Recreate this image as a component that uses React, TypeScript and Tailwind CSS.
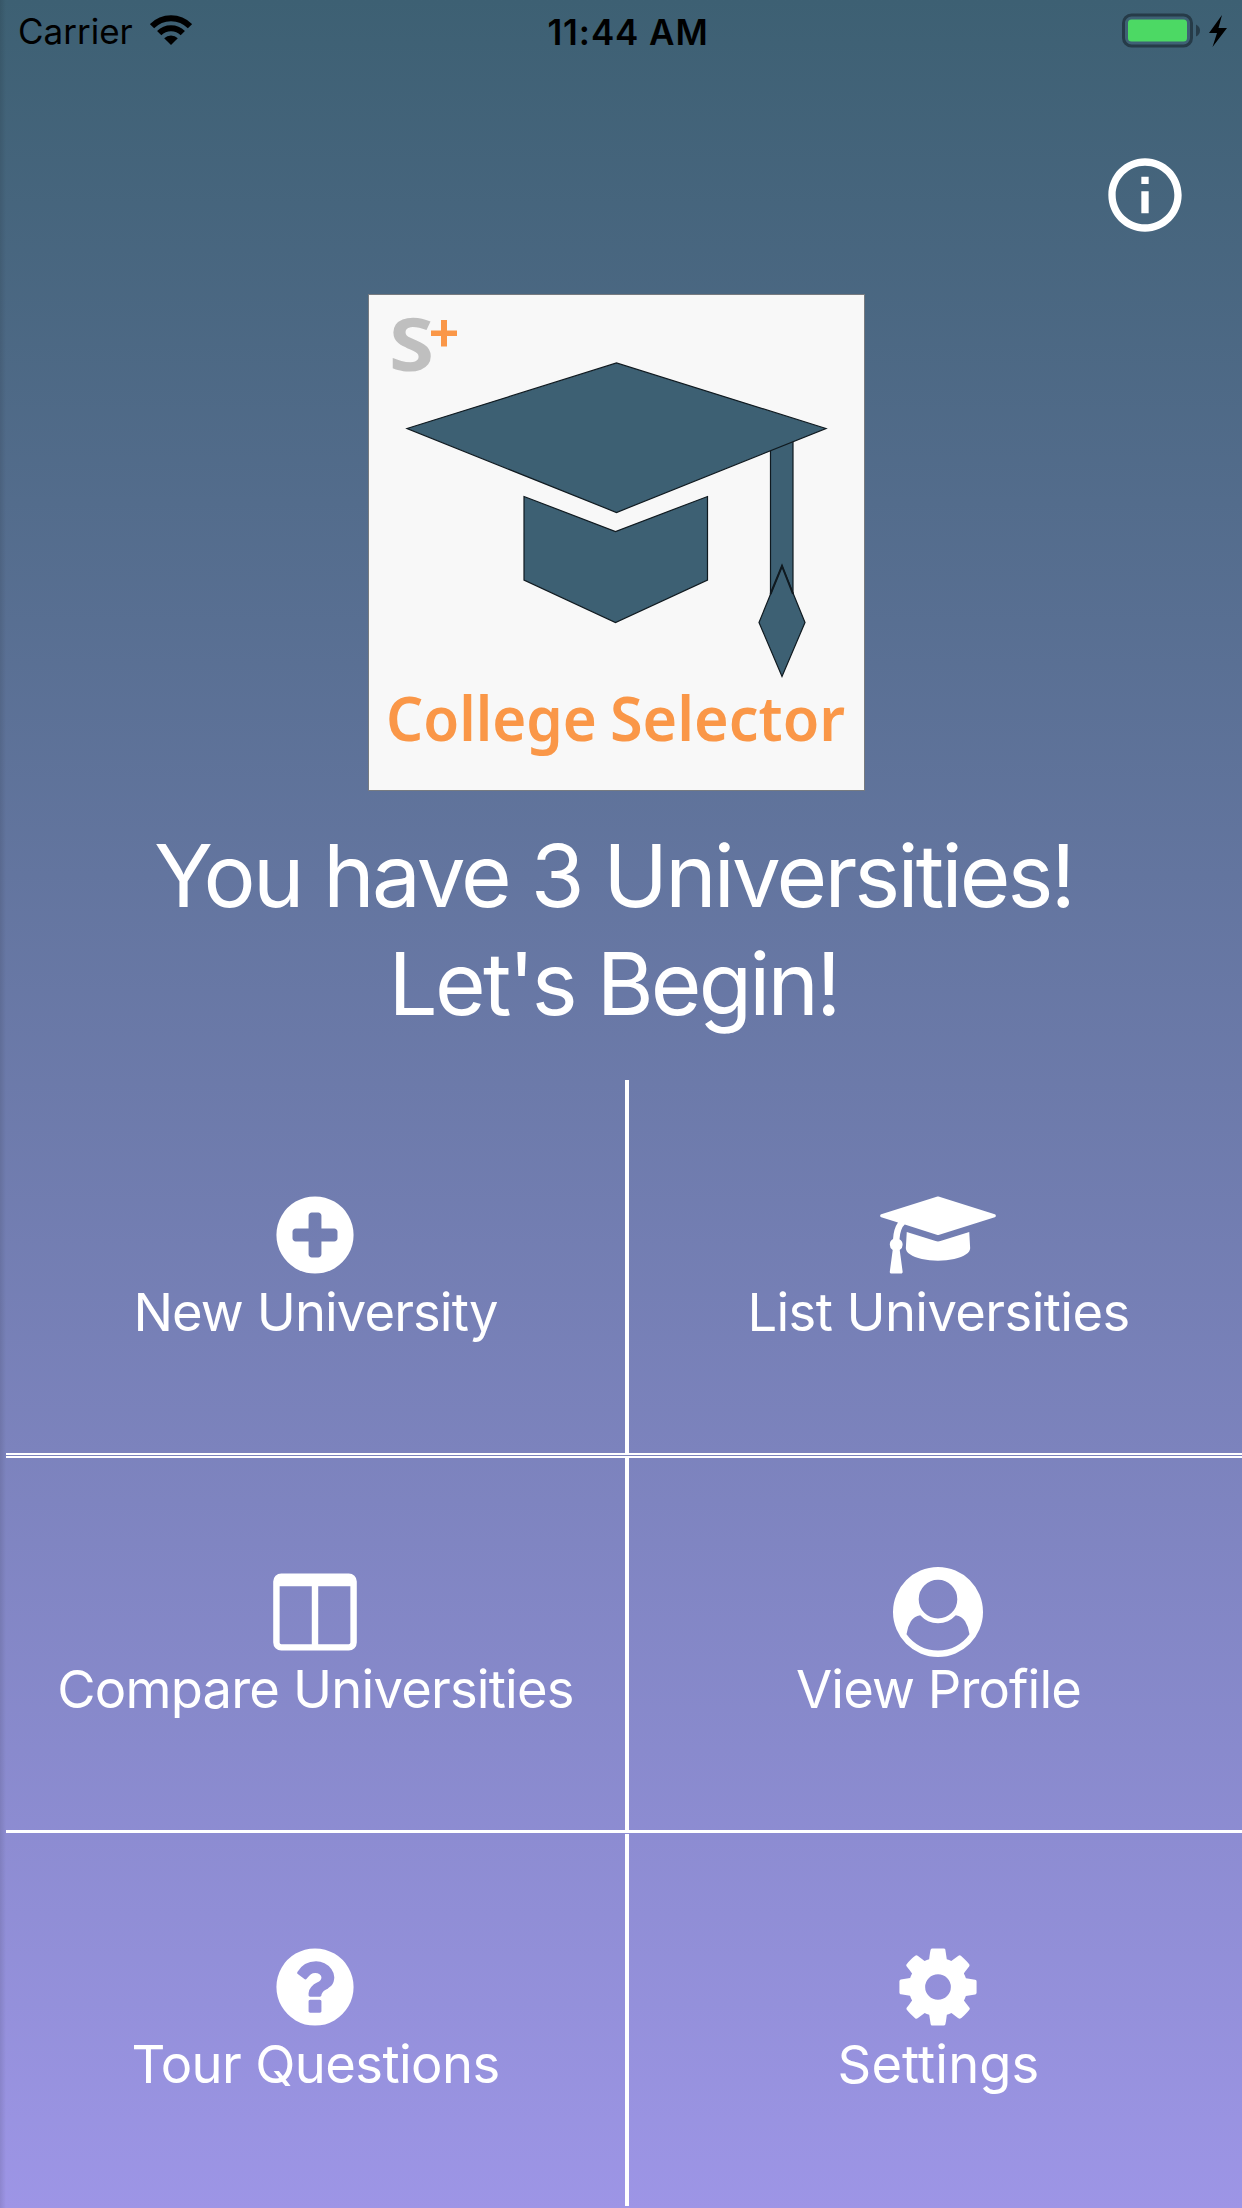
import React from "react";

type GlyphProps = { d: string; width: number; className: string };

function Glyph({ d, width, className }: GlyphProps) {
  return (
    <svg viewBox={`0 0 ${width} 1792`} className={className} fill="currentColor" aria-hidden="true">
      <path d={d} />
    </svg>
  );
}

const PLUS =
  "M1344 960v-128q0-26-19-45t-45-19h-256v-256q0-26-19-45t-45-19h-128q-26 0-45 19t-19 45v256h-256q-26 0-45 19t-19 45v128q0 26 19 45t45 19h256v256q0 26 19 45t45 19h128q26 0 45-19t19-45v-256h256q26 0 45-19t19-45zm320-64q0 209-103 385.5t-279.5 279.5-385.5 103-385.5-103-279.5-279.5-103-385.5 103-385.5 279.5-279.5 385.5-103 385.5 103 279.5 279.5 103 385.5z";

const CAP =
  "M1774 836l18 316q4 69-82 128t-235 93.5-323 34.5-323-34.5-235-93.5-82-128l18-316 574 181q22 7 48 7t48-7zm530-324q0 23-22 31l-1120 352q-4 1-10 1t-10-1l-652-206q-43 34-71 111.5t-34 178.5q63 36 63 109 0 69-58 107l58 433q2 14-8 25-9 11-24 11h-192q-15 0-24-11-10-11-8-25l58-433q-58-38-58-107 0-73 65-111 11-207 98-330l-333-104q-22-8-22-31t22-31l1120-352q4-1 10-1t10 1l1120 352q22 8 22 31z";

const COLUMNS =
  "M224 1536h608v-1152h-640v1120q0 13 9.5 22.5t22.5 9.5zm1376-32v-1120h-640v1152h608q13 0 22.5-9.5t9.5-22.5zm128-1216v1216q0 66-47 113t-113 47h-1344q-66 0-113-47t-47-113v-1216q0-66 47-113t113-47h1344q66 0 113 47t47 113z";

const USER =
  "M1523 1339q-22-155-87.5-257.5t-184.5-118.5q-67 74-159.5 115.5t-195.5 41.5-195.5-41.5-159.5-115.5q-119 16-184.5 118.5t-87.5 257.5q106 150 271 237.5t356 87.5 356-87.5 271-237.5zm-243-699q0-159-112.5-271.5t-271.5-112.5-271.5 112.5-112.5 271.5 112.5 271.5 271.5 112.5 271.5-112.5 112.5-271.5zm512 256q0 182-71 347.5t-190.5 286-285.5 191.5-349 71q-182 0-348-71t-286-191-191-286-71-348 71-348 191-286 286-191 348-71 348 71 286 191 191 286 71 348z";

const QUESTION =
  "M1024 1376v-192q0-14-9-23t-23-9h-192q-14 0-23 9t-9 23v192q0 14 9 23t23 9h192q14 0 23-9t9-23zm256-672q0-88-55.5-163t-138.5-116-170-41q-243 0-371 213-15 24 8 42l132 100q7 6 19 6 16 0 25-12 53-68 86-92 34-24 86-24 48 0 85.5 26t37.5 59q0 38-20 61t-68 45q-63 28-115.5 86.5t-52.5 125.5v36q0 14 9 23t23 9h192q14 0 23-9t9-23q0-19 21.5-49.5t54.5-49.5q32-18 49-28.5t46-35 44.5-48 28-60.5 12.5-81zm384 192q0 209-103 385.5t-279.5 279.5-385.5 103-385.5-103-279.5-279.5-103-385.5 103-385.5 279.5-279.5 385.5-103 385.5 103 279.5 279.5 103 385.5z";

const GEAR =
  "M1152 896q0-106-75-181t-181-75-181 75-75 181 75 181 181 75 181-75 75-181zm512-109v222q0 12-8 23t-20 13l-185 28q-19 54-39 91 35 50 107 138 10 12 10 25t-9 23q-27 37-99 108t-94 71q-12 0-26-9l-138-108q-44 23-91 38-16 136-29 186-7 28-36 28h-222q-14 0-24.5-8.5t-11.5-21.5l-28-184q-49-16-90-37l-141 107q-10 9-25 9-14 0-25-11-126-114-165-168-7-10-7-23 0-12 8-23 15-21 51-66.5t54-70.5q-27-50-41-99l-183-27q-13-2-21-12.5t-8-23.5v-222q0-12 8-23t19-13l186-28q14-46 39-92-40-57-107-138-10-12-10-24 0-10 9-23 26-36 98.5-107.5t94.5-71.5q13 0 26 10l138 107q44-23 91-38 16-136 29-186 7-28 36-28h222q14 0 24.5 8.5t11.5 21.5l28 184q49 16 90 37l142-107q9-9 24-9 13 0 25 10 129 119 165 170 7 8 7 22 0 12-8 23-15 21-51 66.5t-54 70.5q26 50 41 98l183 28q13 2 21 12.5t8 23.5z";

function StatusBar() {
  return (
    <header className="grid h-[60px] grid-cols-3 items-center pr-[15px] pl-[18px] text-black">
      <div className="flex items-center">
        <span className="pt-[2px] text-[35px] leading-none">Carrier</span>
        <svg viewBox="0 0 42 30" className="ml-[17px] h-[30px] w-[42px]" fill="none" stroke="currentColor">
          <path d="M2 11.2a26.5 26.5 0 0 1 38 0" strokeWidth="6" />
          <path d="M9.2 18.2a16.6 16.6 0 0 1 23.6 0" strokeWidth="6" />
          <path d="M21 30l-6.8-6.8a9.6 9.6 0 0 1 13.6 0z" fill="currentColor" stroke="none" />
        </svg>
      </div>
      <span className="pt-[4px] pl-[11px] text-center text-[35px] leading-none font-semibold tracking-[0.9px] whitespace-nowrap">
        11:44 AM
      </span>
      <div className="flex items-center justify-end">
        <svg viewBox="0 0 105 36" className="h-9 w-[105px]">
          <rect x="1.5" y="3" width="68" height="31" rx="8" fill="none" stroke="#263b48" strokeWidth="3" />
          <rect x="6" y="7.5" width="59" height="22" rx="3.5" fill="#4cd964" />
          <path d="M74 12.5q4 2 4 6t-4 6z" fill="#263b48" />
          <path d="M100 3L87 21h8l-4.500 14L105 16h-8.500z" fill="#000" />
        </svg>
      </div>
    </header>
  );
}

function Logo() {
  return (
    <svg viewBox="0 0 497 497" className="h-[497px] w-[497px] overflow-visible" stroke="#101a20" strokeWidth="1.200">
      <rect x="0.500" y="0.500" width="496" height="496" fill="#f8f8f8" stroke="#777b80" strokeWidth="1" />
      <path d="M402.500 140h22.500v180h-22.500z" fill="#3d6073" />
      <path d="M39 134.500L248.500 69 458 134.500 248.500 218.500z" fill="#3d6073" />
      <path d="M156 202.500l91.500 35 92-35v83.500l-92 42.500-91.500-42.500z" fill="#3d6073" />
      <path d="M414 272l23 56.500-23 54-23-54z" fill="#3d6073" />
      <path d="M402.500 300L414 272l11 28" fill="none" strokeWidth="2" />
      <g stroke="none">
        <text x="21" y="77" fill="#bfbfbf" fontSize="74" fontWeight="700" fontFamily="Noto Sans, sans-serif" textLength="45" lengthAdjust="spacingAndGlyphs">
          S
        </text>
        <path d="M73 26h6v10.500h10v5.500h-10v10.500h-6v-10.500h-10v-5.500h10z" fill="#fa9748" />
        <g fill="#fa9748" fontSize="61" fontWeight="600" fontFamily="Noto Sans, sans-serif">
          <text x="18" y="447" textLength="211" lengthAdjust="spacingAndGlyphs">
            College
          </text>
          <text x="242" y="447" textLength="235" lengthAdjust="spacingAndGlyphs">
            Selector
          </text>
        </g>
      </g>
    </svg>
  );
}

const tiles = [
  { label: "New University", d: PLUS, width: 1792, size: "mr-0.5 h-[90px] w-[90px]", track: "tracking-[-0.9px]", border: "border-r-4 border-b-2" },
  { label: "List Universities", d: CAP, width: 2304, size: "mr-0.5 h-[90px] w-[116px]", track: "tracking-[-0.6px]", border: "border-b-2" },
  { label: "Compare Universities", d: COLUMNS, width: 1792, size: "mr-0.5 h-[90px] w-[90px]", track: "tracking-[-0.8px]", border: "border-t-2 border-r-4 border-b-3" },
  { label: "View Profile", d: USER, width: 1792, size: "mr-0.5 h-[90px] w-[90px]", track: "tracking-[-0.9px]", border: "border-t-2 border-b-3" },
  { label: "Tour Questions", d: QUESTION, width: 1792, size: "mr-0.5 h-[90px] w-[90px]", track: "tracking-[-0.6px]", border: "border-r-4 pb-0.5" },
  { label: "Settings", d: GEAR, width: 1792, size: "mr-0.5 h-[90px] w-[90px]", track: "tracking-[0.1px]", border: "pb-0.5" },
];

export default function App() {
  return (
    <main className="relative flex h-[2208px] w-[1242px] flex-col overflow-hidden bg-linear-to-b from-[#3d6073] to-[#9d95e6] font-[Inter,sans-serif] text-white">
      <div className="absolute inset-y-0 left-0 w-1.5 bg-linear-to-r from-black/10 to-transparent" />
      <StatusBar />
      <div className="flex h-[234px] shrink-0 justify-end pt-[91px] pr-[53px]">
        <svg viewBox="0 0 24 24" className="h-[88px] w-[88px]" fill="currentColor">
          <path d="M11 17h2v-6h-2v6zm1-15C6.480 2 2 6.480 2 12s4.480 10 10 10 10-4.480 10-10S17.520 2 12 2zm0 18c-4.410 0-8-3.590-8-8s3.590-8 8-8 8 3.590 8 8-3.590 8-8 8zM11 9h2V7h-2v2z" />
        </svg>
      </div>
      <section className="flex h-[786px] shrink-0 flex-col items-center pr-[9px]">
        <Logo />
        <h1 className="mt-[31px] pr-[6px] text-center text-[87px] leading-[108px] font-normal tracking-[-2.8px] whitespace-nowrap">
          You have 3 Universities!
          <br />
          Let's Begin!
        </h1>
      </section>
      <nav className="ml-1.5 grid h-[1126px] w-[1242px] shrink-0 grid-cols-[623px_619px] grid-rows-[375px_377px_372px] gap-y-px">
        {tiles.map((t) => (
          <button key={t.label} className={`flex flex-col items-center justify-center border-white ${t.border}`}>
            <Glyph d={t.d} width={t.width} className={t.size} />
            <span className={`text-[52.500px] leading-[64px] whitespace-nowrap ${t.track}`}>{t.label}</span>
          </button>
        ))}
      </nav>
    </main>
  );
}
